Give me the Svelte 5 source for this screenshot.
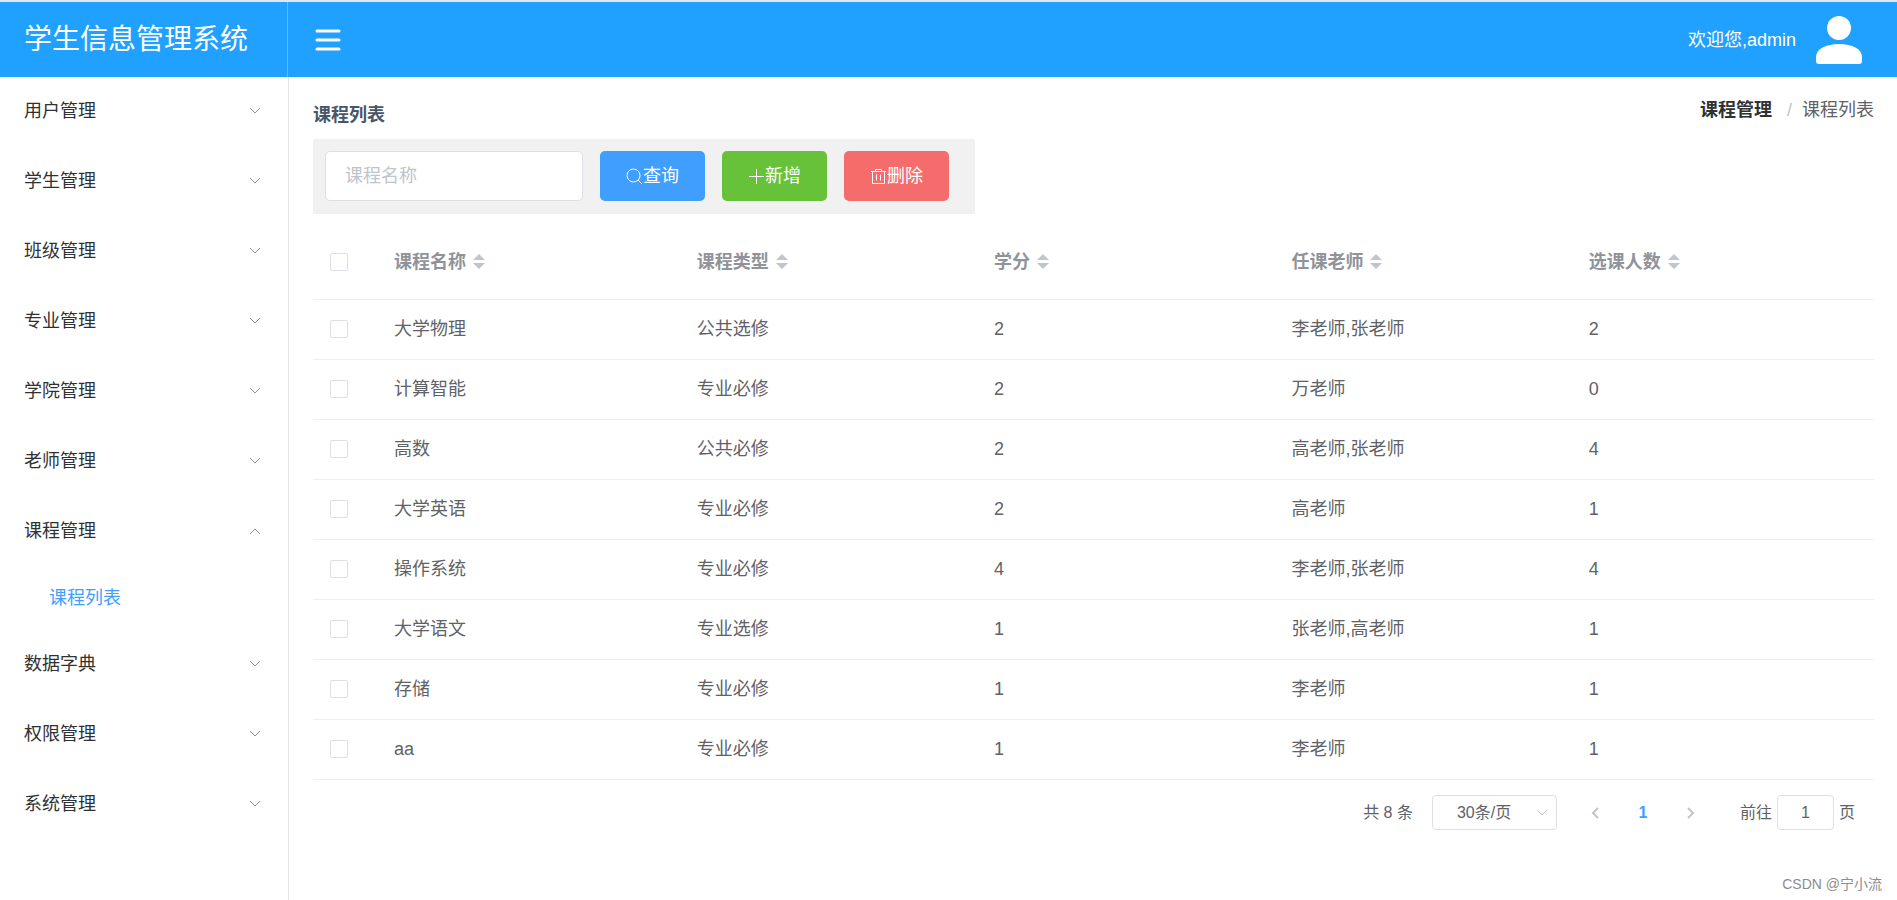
<script lang="ts">
    let menus = $state([
        { name: '用户管理', open: false, children: [] },
        { name: '学生管理', open: false, children: [] },
        { name: '班级管理', open: false, children: [] },
        { name: '专业管理', open: false, children: [] },
        { name: '学院管理', open: false, children: [] },
        { name: '老师管理', open: false, children: [] },
        { name: '课程管理', open: true, children: ['课程列表'] },
        { name: '数据字典', open: false, children: [] },
        { name: '权限管理', open: false, children: [] },
        { name: '系统管理', open: false, children: [] },
    ]);

    const columns = ['课程名称', '课程类型', '学分', '任课老师', '选课人数'];

    let courses = $state([
        { name: '大学物理', type: '公共选修', credit: 2, teacher: '李老师,张老师', count: 2, checked: false },
        { name: '计算智能', type: '专业必修', credit: 2, teacher: '万老师', count: 0, checked: false },
        { name: '高数', type: '公共必修', credit: 2, teacher: '高老师,张老师', count: 4, checked: false },
        { name: '大学英语', type: '专业必修', credit: 2, teacher: '高老师', count: 1, checked: false },
        { name: '操作系统', type: '专业必修', credit: 4, teacher: '李老师,张老师', count: 4, checked: false },
        { name: '大学语文', type: '专业选修', credit: 1, teacher: '张老师,高老师', count: 1, checked: false },
        { name: '存储', type: '专业必修', credit: 1, teacher: '李老师', count: 1, checked: false },
        { name: 'aa', type: '专业必修', credit: 1, teacher: '李老师', count: 1, checked: false },
    ]);

    let keyword = $state('');
    let collapsed = $state(false);
    let page = $state('1');

    function toggleAll(e: Event) {
        const checked = (e.target as HTMLInputElement).checked;
        courses.forEach((c) => (c.checked = checked));
    }
</script>

<div class="app">
    <header>
        <div class="logo">学生信息管理系统</div>
        <button class="fold" aria-label="折叠菜单" onclick={() => (collapsed = !collapsed)}>
            <svg width="26" height="22" viewBox="0 0 26 22">
                <path d="M2 2H24M2 11H24M2 20H24" stroke="#fff" stroke-width="3" stroke-linecap="round" />
            </svg>
        </button>
        <div class="user">
            <span>欢迎您,admin</span>
            <svg width="48" height="48" viewBox="0 0 48 48" fill="#fff">
                <circle cx="24" cy="12" r="12" />
                <path d="M1 41C1 33 11 28 24 28S47 33 47 41V45Q47 48 44 48H4Q1 48 1 45Z" />
            </svg>
        </div>
    </header>

    <div class="body">
        {#if !collapsed}
            <nav>
                {#each menus as menu}
                    <button class="menu" onclick={() => (menu.open = !menu.open)}>
                        {menu.name}
                        <svg class:up={menu.open} width="12" height="8" viewBox="0 0 12 8">
                            <path d="M1 1L6 6L11 1" fill="none" stroke="#909399" />
                        </svg>
                    </button>
                    {#if menu.open}
                        {#each menu.children as child}
                            <a class="submenu" href="#courses">{child}</a>
                        {/each}
                    {/if}
                {/each}
            </nav>
        {/if}

        <main>
            <div class="top">
                <h1>课程列表</h1>
                <div class="breadcrumb">
                    <b>课程管理</b>
                    <i>/</i>
                    <span>课程列表</span>
                </div>
            </div>

            <form class="toolbar" onsubmit={(e) => e.preventDefault()}>
                <input type="text" placeholder="课程名称" aria-label="课程名称" bind:value={keyword} />
                <button class="primary">
                    <svg width="17" height="17" viewBox="0 0 17 17">
                        <path d="M12 12L16 16" />
                        <circle cx="7.5" cy="7.5" r="6.5" />
                    </svg>查询
                </button>
                <button class="success" type="button">
                    <svg width="17" height="17" viewBox="0 0 17 17">
                        <path d="M8.5 1V16M1 8.5H16" />
                    </svg>新增
                </button>
                <button class="danger" type="button">
                    <svg width="17" height="17" viewBox="0 0 17 17">
                        <path d="M1 3.5H16M5.5 3.5V1.5H11.5V3.5M2.5 3.5V15.5H14.5V3.5M6.5 6.5V12.5M10.5 6.5V12.5" />
                    </svg>删除
                </button>
            </form>

            <table>
                <thead>
                    <tr>
                        <th class="check"><input type="checkbox" aria-label="全选" onchange={toggleAll} /></th>
                        {#each columns as col, i}
                            <th class:name={i === 0}>
                                {col}
                                <svg width="12" height="16" viewBox="0 0 12 16" fill="#c0c4cc">
                                    <path d="M6 0L12 6H0ZM0 9H12L6 15Z" />
                                </svg>
                            </th>
                        {/each}
                    </tr>
                </thead>
                <tbody>
                    {#each courses as course}
                        <tr>
                            <td class="check"><input type="checkbox" aria-label={course.name} bind:checked={course.checked} /></td>
                            <td>{course.name}</td>
                            <td>{course.type}</td>
                            <td>{course.credit}</td>
                            <td>{course.teacher}</td>
                            <td>{course.count}</td>
                        </tr>
                    {/each}
                </tbody>
            </table>

            <div class="pagination">
                <span>共 8 条</span>
                <div class="size">
                    <select aria-label="每页条数">
                        <option>30条/页</option>
                        <option>50条/页</option>
                    </select>
                    <svg width="12" height="8" viewBox="0 0 12 8">
                        <path d="M1 1L6 6L11 1" fill="none" stroke="#c0c4cc" />
                    </svg>
                </div>
                <div class="pager">
                    <button aria-label="上一页" disabled>
                        <svg width="8" height="12" viewBox="0 0 8 12">
                            <path d="M7 1L2 6L7 11" fill="none" stroke="#c0c4cc" stroke-width="2" />
                        </svg>
                    </button>
                    <button class="current">1</button>
                    <button aria-label="下一页" disabled>
                        <svg width="8" height="12" viewBox="0 0 8 12">
                            <path d="M1 1L6 6L1 11" fill="none" stroke="#c0c4cc" stroke-width="2" />
                        </svg>
                    </button>
                </div>
                <label>前往 <input type="text" bind:value={page} /> 页</label>
            </div>
        </main>
    </div>

    <div class="watermark">CSDN @宁小流</div>
</div>

<style>
    :global(body) {
        background: #fff;
    }
    .app {
        display: flex;
        flex-direction: column;
        min-height: 100vh;
        box-sizing: border-box;
        border-top: 2px solid #e4e7ea;
        position: relative;
        font-family: "Liberation Sans", "Noto Sans CJK SC", sans-serif;
        font-size: 18px;
        line-height: 24px;
        color: #606266;
    }
    button, input, select {
        font: inherit;
        color: inherit;
        box-sizing: border-box;
        margin: 0;
    }
    button {
        border: none;
        background: none;
        cursor: pointer;
    }
    svg {
        display: block;
        flex: none;
    }

    header {
        display: flex;
        align-items: center;
        height: 75px;
        background: #20a0ff;
        color: #fff;
    }
    .logo {
        box-sizing: border-box;
        width: 288px;
        padding-left: 24px;
        border-right: 1px solid #62bcf5;
        font-size: 28px;
        line-height: 75px;
        white-space: nowrap;
    }
    .fold {
        padding: 0 27px;
    }
    .user {
        display: flex;
        align-items: center;
        gap: 19px;
        margin-left: auto;
        padding-right: 34px;
    }

    .body {
        display: flex;
        flex: 1;
    }
    nav {
        flex: none;
        width: 288px;
        border-right: 1px solid #e6e6e6;
    }
    .menu {
        display: flex;
        align-items: center;
        justify-content: space-between;
        width: 100%;
        height: 70px;
        padding: 0 27px 2px 24px;
        color: #303133;
    }
    .up {
        transform: rotate(180deg);
    }
    .submenu {
        display: block;
        padding-left: 49px;
        line-height: 63px;
        color: #409eff;
        text-decoration: none;
    }

    main {
        flex: 1;
        min-width: 0;
        padding: 20px 23px 0 24px;
    }
    .top {
        display: flex;
        justify-content: space-between;
        height: 42px;
    }
    h1 {
        margin: 0;
        padding-top: 6px;
        font-size: 18px;
        line-height: 24px;
        color: #475669;
    }
    .breadcrumb {
        display: flex;
        gap: 10px;
        padding-top: 1px;
    }
    .breadcrumb b {
        color: #303133;
        margin-right: 5px;
    }
    .breadcrumb i {
        font-style: normal;
        color: #c0c4cc;
    }

    .toolbar {
        display: flex;
        align-items: center;
        gap: 17px;
        width: fit-content;
        height: 75px;
        box-sizing: border-box;
        padding: 0 26px 1px 12px;
        background: #f1f1f1;
    }
    .toolbar input {
        width: 258px;
        height: 50px;
        padding: 0 19px;
        border: 1px solid #dcdfe6;
        border-radius: 5px;
        background: #fff;
    }
    .toolbar input::placeholder {
        color: #c0c4cc;
    }
    .toolbar button {
        display: flex;
        align-items: center;
        justify-content: center;
        width: 105px;
        height: 50px;
        padding: 0;
        border-radius: 5px;
        color: #fff;
    }
    .toolbar svg {
        fill: none;
        stroke: #fff;
    }
    .primary {
        background: #409eff;
    }
    .success {
        background: #67c23a;
    }
    .danger {
        background: #f56c6c;
    }

    table {
        width: 100%;
        margin-top: 10px;
        table-layout: fixed;
        border-collapse: separate;
        border-spacing: 0;
    }
    th, td {
        box-sizing: border-box;
        height: 60px;
        padding: 0 12px;
        border-bottom: 1px solid #ebeef5;
        text-align: left;
    }
    td {
        padding-bottom: 2px;
    }
    th {
        height: 76px;
        color: #909399;
    }
    th svg {
        display: inline-block;
        vertical-align: -2px;
        margin-left: 2px;
    }
    .check {
        width: 69px;
        padding-left: 17px;
    }
    .name {
        width: 19.4%;
    }
    input[type='checkbox'] {
        appearance: none;
        display: block;
        width: 18px;
        height: 18px;
        border: 1px solid #dcdfe6;
        border-radius: 2px;
        background: #fff;
    }
    input[type='checkbox']:checked {
        background: #409eff;
        border-color: #409eff;
    }

    .pagination {
        display: flex;
        align-items: center;
        justify-content: flex-end;
        padding: 15px 19px 0 0;
        font-size: 16px;
    }
    .size {
        position: relative;
        margin: 0 14px 0 19px;
    }
    .size select {
        appearance: none;
        display: block;
        width: 125px;
        height: 35px;
        padding: 0 24px;
        border: 1px solid #dcdfe6;
        border-radius: 4px;
        background: #fff;
    }
    .size svg {
        position: absolute;
        right: 9px;
        top: 14px;
        pointer-events: none;
    }
    .pager {
        display: flex;
    }
    .pager button {
        display: flex;
        align-items: center;
        justify-content: center;
        width: 48px;
        height: 35px;
        padding: 0;
    }
    .current {
        color: #409eff;
        font-weight: bold;
    }
    .pagination label {
        display: flex;
        align-items: center;
        gap: 5px;
        margin-left: 25px;
    }
    .pagination label input {
        width: 57px;
        height: 35px;
        padding: 0;
        border: 1px solid #dcdfe6;
        border-radius: 4px;
        text-align: center;
    }

    .watermark {
        position: absolute;
        right: 15px;
        bottom: 4px;
        font-size: 14px;
        color: #8c8c8c;
    }
</style>
